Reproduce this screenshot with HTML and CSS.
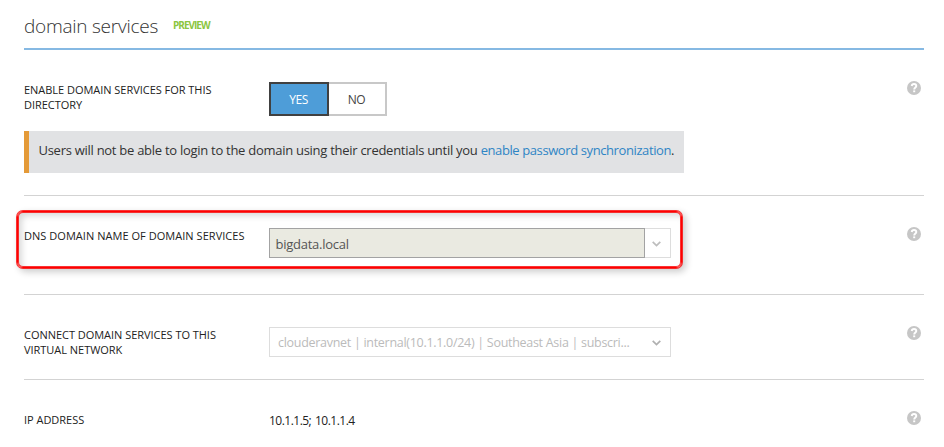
FILE: index.html
```html
<!DOCTYPE html>
<html lang="en">
<head>
<meta charset="utf-8">
<title>domain services</title>
<link rel="stylesheet" href="styles.css">
</head>
<body>
<svg class="defs" width="0" height="0">
  <symbol id="help" viewBox="0 0 14 14">
    <circle cx="7" cy="7" r="7" fill="#c6c6c6"/>
    <path d="M4.700 5C4.900 3.500 5.900 3 7 3c1.400 0 2.300.8 2.300 2C9.300 6.500 7.200 6.600 7.200 8.500" fill="none" stroke="#fff" stroke-width="1.900"/>
    <rect x="6.200" y="9.400" width="2" height="1.800" fill="#fff"/>
  </symbol>
  <symbol id="chevron" viewBox="0 0 9 6">
    <path d="M.7.800 4.500 4.600 8.300.800" fill="none" stroke="currentColor" stroke-width="1.700"/>
  </symbol>
</svg>
<main class="panel">
  <header class="head">
    <h1 class="title">domain services</h1>
    <span class="preview">PREVIEW</span>
  </header>
  <section class="row row-enable">
    <div class="line">
      <div class="label label-enable">ENABLE DOMAIN SERVICES FOR THIS<br>DIRECTORY</div>
      <div class="toggle"><span class="opt on">YES</span><span class="opt off">NO</span></div>
      <svg class="help"><use href="#help"/></svg>
    </div>
    <div class="notice"><p>Users will not be able to login to the domain using their credentials until you <a>enable password synchronization</a>.</p></div>
  </section>
  <section class="row row-dns">
    <div class="highlight"></div>
    <div class="line">
      <div class="label label-dns">DNS DOMAIN NAME OF DOMAIN SERVICES</div>
      <div class="combo"><span class="value">bigdata.local</span><span class="drop"><svg class="chev"><use href="#chevron"/></svg></span></div>
      <svg class="help"><use href="#help"/></svg>
    </div>
  </section>
  <section class="row row-net">
    <div class="line">
      <div class="label label-net">CONNECT DOMAIN SERVICES TO THIS<br>VIRTUAL NETWORK</div>
      <div class="select"><span class="choice">clouderavnet | internal(10.1.1.0/24) | Southeast Asia | subscri...</span><svg class="chev"><use href="#chevron"/></svg></div>
      <svg class="help"><use href="#help"/></svg>
    </div>
  </section>
  <section class="row row-ip">
    <div class="line">
      <div class="label label-ip">IP ADDRESS</div>
      <div class="ip"><span>10.1.1.5; 10.1.1.4</span></div>
      <svg class="help"><use href="#help"/></svg>
    </div>
  </section>
</main>
</body>
</html>
```
FILE: styles.css
```css
* { box-sizing: border-box; }
body { margin: 0; background: #fff; color: #222; font-family: "Open Sans", "Noto Sans", sans-serif; overflow: hidden; }
.defs { display: block; height: 0; }
.panel { width: 900px; margin-left: 24px; }
.head { display: flex; height: 50px; border-bottom: 2px solid #86b9e3; }
.title { margin: 12px 0 0; width: 149px; font-size: 19px; line-height: 28px; font-weight: 300; color: #333; letter-spacing: -0.25px; white-space: nowrap; }
.preview { margin-top: 18px; font-size: 10px; line-height: 14px; font-weight: 700; color: #8cc63f; letter-spacing: -1px; }
.row { position: relative; border-bottom: 1px solid #d3d3d3; padding-top: 32px; }
.row-enable { height: 146px; }
.row-dns { height: 99px; }
.row-net { height: 85px; }
.row-ip { height: 67px; border: 0; }
.line { display: grid; grid-template-columns: 245px 402px 1fr; align-items: start; }
.label { font-size: 11px; line-height: 15px; letter-spacing: -0.03px; white-space: nowrap; }
.label-dns { letter-spacing: 0.04px; }
.help { width: 14px; height: 14px; justify-self: end; margin: -1px 3px 0 0; }
.toggle { display: flex; height: 34px; }
.opt { border: 2px solid #c8c8c8; font-size: 12px; line-height: 31px; text-align: center; letter-spacing: -0.5px; }
.on { width: 60px; padding-right: 1px; background: #4e9dd8; border-color: #404040; color: #fff; }
.off { width: 58px; padding-right: 1px; border-left: 0; color: #444; }
.notice { width: 660px; height: 42px; margin-top: 15px; padding-left: 9.5px; border-left: 5px solid #e49a38; background: #e1e2e4; }
.notice p { margin: 0; font-size: 13px; line-height: 39px; white-space: nowrap; letter-spacing: -0.275px; color: #333; }
.notice a { color: #2f85c5; letter-spacing: -0.4px; }
.highlight { position: absolute; left: -7px; top: 15px; width: 665px; height: 57px; border: 1px solid #f00; border-radius: 6px; box-shadow: 0 0 0 1px rgba(250,0,0,.8), inset 0 0 0 1px rgba(250,0,0,.8), 3px 3px 7px 1px rgba(0,0,0,.2), inset 4px 4px 6px rgba(0,0,0,.15); }
.combo { display: flex; height: 30px; }
.value { width: 376px; padding-left: 5.5px; border: 1px solid #a3a3a3; background: #eaeae1; color: #555; font-size: 13px; line-height: 30px; letter-spacing: -0.25px; }
.drop { display: flex; width: 26px; padding: 12px 0 0 7px; border: 1px solid #ddd; border-left: 0; }
.chev { width: 9px; height: 6px; color: #bdbdbd; }
.select { display: flex; height: 30px; border: 1px solid #ddd; padding-left: 8px; color: #bbb; }
.choice { width: 374px; font-size: 12.5px; line-height: 29px; white-space: nowrap; letter-spacing: -0.29px; }
.select .chev { margin-top: 12px; color: #b0b0b0; }
.ip { font-size: 12px; line-height: 17px; letter-spacing: -0.52px; word-spacing: 1.2px; }
```
